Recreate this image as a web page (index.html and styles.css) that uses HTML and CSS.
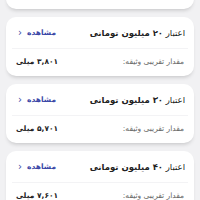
FILE: index.html
```html
<!DOCTYPE html>
<html lang="fa" dir="rtl">
<head>
<meta charset="utf-8">
<link rel="stylesheet" href="styles.css">
</head>
<body>
<div class="list">
  <div class="card">
    <div class="head">
      <span class="title">اعتبار <b>۱۰ میلیون تومانی</b></span>
      <span class="link">مشاهده <span class="chev">‹</span></span>
    </div>
    <div class="body">
      <span class="label">مقدار تقریبی وثیقه:</span>
      <span class="value">۱,۹۰۱ میلی</span>
    </div>
  </div>
  <div class="card">
    <div class="head">
      <span class="title">اعتبار <b>۲۰ میلیون تومانی</b></span>
      <span class="link">مشاهده <span class="chev">‹</span></span>
    </div>
    <div class="body">
      <span class="label">مقدار تقریبی وثیقه:</span>
      <span class="value">۳,۸۰۱ میلی</span>
    </div>
  </div>
  <div class="card">
    <div class="head">
      <span class="title">اعتبار <b>۳۰ میلیون تومانی</b></span>
      <span class="link">مشاهده <span class="chev">‹</span></span>
    </div>
    <div class="body">
      <span class="label">مقدار تقریبی وثیقه:</span>
      <span class="value">۵,۷۰۱ میلی</span>
    </div>
  </div>
  <div class="card">
    <div class="head">
      <span class="title">اعتبار <b>۴۰ میلیون تومانی</b></span>
      <span class="link">مشاهده <span class="chev">‹</span></span>
    </div>
    <div class="body">
      <span class="label">مقدار تقریبی وثیقه:</span>
      <span class="value">۷,۶۰۱ میلی</span>
    </div>
  </div>
</div>
</body>
</html>
```
FILE: styles.css
```css
html, body {
  margin: 0;
  padding: 0;
  background: #f1f1f3;
  font-family: "DejaVu Sans", "Noto Sans", sans-serif;
  overflow: hidden;
}
.list {
  display: flex;
  flex-direction: column;
  gap: 8px;
  padding: 0 6px;
  margin-top: -50px;
}
.card {
  background: #ffffff;
  border-radius: 10px;
  box-shadow: 0 3px 4px -2px rgba(0,0,0,0.2);
  display: flex;
  flex-direction: column;
}
.head {
  height: 31px;
  display: flex;
  align-items: center;
  justify-content: space-between;
  border-bottom: 1px solid #f3f3f5;
  margin: 0 6px;
  padding-left: 6px;
  padding-right: 3px;
}
.title {
  font-size: 8.5px;
  color: #222;
  font-weight: normal;
}
.title b {
  font-weight: bold;
}
.link {
  font-size: 7.5px;
  font-weight: bold;
  color: #3b47a6;
  display: flex;
  align-items: center;
  gap: 5px;
}
.chev {
  font-size: 10px;
  font-weight: normal;
}
.body {
  height: 25px;
  display: flex;
  align-items: center;
  justify-content: space-between;
  padding: 0 10px 2px 10px;
}
.label {
  font-size: 7.5px;
  color: #666;
}
.value {
  font-size: 7.5px;
  font-weight: bold;
  color: #222;
}
```
